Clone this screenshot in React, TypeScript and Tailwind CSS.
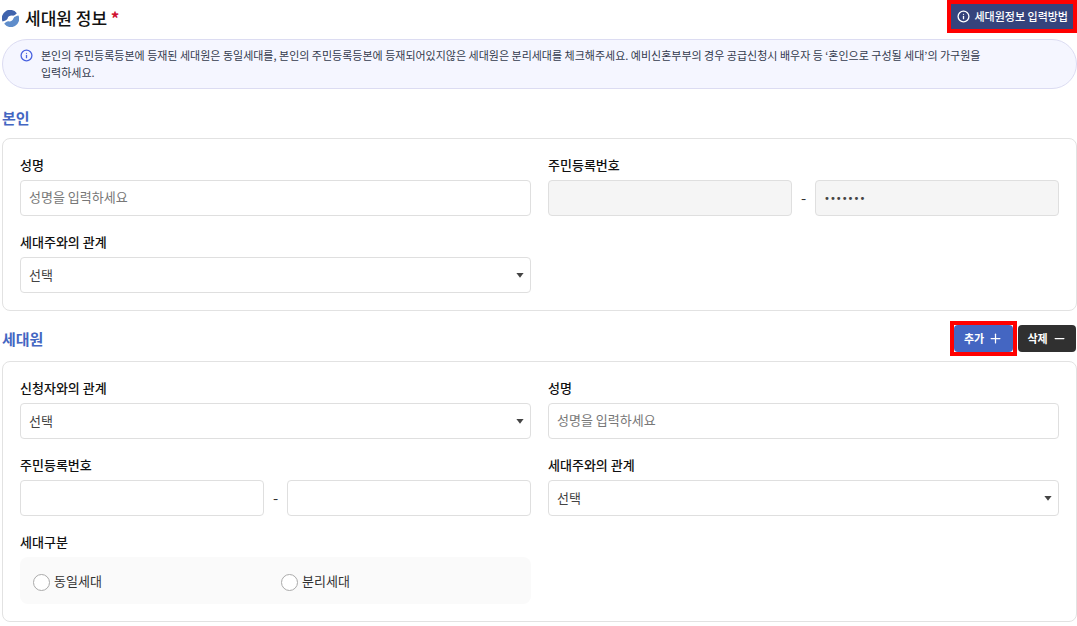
import { useId, type ReactNode } from "react";
import clsx from "clsx";
import { Info, Minus, Plus } from "lucide-react";

const controlClass =
  "h-9 w-full min-w-0 rounded-[4px] border border-[#dfdfdf] px-2 text-[#444] placeholder:text-[#777]";

function Field({
  id,
  label,
  children,
}: {
  id: string;
  label: string;
  children: ReactNode;
}) {
  return (
    <div className="min-w-0">
      <label
        htmlFor={id}
        className="mb-[5px] block text-[13px] leading-5 font-medium text-[#111]"
      >
        {label}
      </label>
      {children}
    </div>
  );
}

function TextField({ label }: { label: string }) {
  const id = useId();
  return (
    <Field id={id} label={label}>
      <input
        id={id}
        type="text"
        placeholder="성명을 입력하세요"
        className={clsx(controlClass, "bg-white pb-1 text-[13px]")}
      />
    </Field>
  );
}

function SelectField({ label }: { label: string }) {
  const id = useId();
  return (
    <Field id={id} label={label}>
      <div className="relative">
        <select
          id={id}
          className={clsx(
            controlClass,
            "block appearance-none bg-white text-[13px]",
          )}
        >
          <option>선택</option>
        </select>
        <svg
          viewBox="0 0 8 5"
          className="pointer-events-none absolute top-4 right-[7px] h-[5px] w-2"
          fill="#444"
        >
          <path d="M0.4 0h7.2L4 4.8z" />
        </svg>
      </div>
    </Field>
  );
}

function IdNumberField({
  label,
  locked,
}: {
  label: string;
  locked?: boolean;
}) {
  const id = useId();
  const background = locked ? "bg-[#f5f5f5]" : "bg-white";
  return (
    <Field id={id} label={label}>
      <div className="flex items-center">
        <input
          id={id}
          type="text"
          readOnly={locked}
          className={clsx(controlClass, background, "text-[13px]")}
        />
        <span className="w-[23px] shrink-0 text-center text-[15px] leading-5 text-[#333]">
          -
        </span>
        <input
          type="password"
          aria-label={label}
          readOnly={locked}
          defaultValue={locked ? "0000000" : ""}
          className={clsx(
            controlClass,
            background,
            "font-['DejaVu_Sans',sans-serif] text-[10px]",
          )}
        />
      </div>
    </Field>
  );
}

function HouseholdTypeField() {
  return (
    <fieldset className="min-w-0">
      <legend className="mb-[5px] text-[13px] leading-5 font-medium text-[#111]">
        세대구분
      </legend>
      <div className="grid grid-cols-2 rounded-lg bg-[#fafafa] pt-[14px] pr-[2px] pb-[13px] pl-[13px]">
        {["동일세대", "분리세대"].map((name) => (
          <label
            key={name}
            className="flex items-center gap-1 text-[13px] leading-5 text-[#333]"
          >
            <input
              type="radio"
              name="householdType"
              className="mt-[3px] size-[17px] appearance-none rounded-full border border-[#aaa] bg-white checked:border-[5px] checked:border-[#4466c2]"
            />
            {name}
          </label>
        ))}
      </div>
    </fieldset>
  );
}

function Card({ children }: { children: ReactNode }) {
  return (
    <div className="grid grid-cols-2 gap-x-[17px] gap-y-4 rounded-lg border border-[#e2e2e2] px-[17px] pt-4 pb-[17px]">
      {children}
    </div>
  );
}

function Logo() {
  return (
    <svg viewBox="0 0 17 17" className="size-[17px]">
      <path
        d="M0.5 11.4A8.3 8.3 0 0 1 14.8 3.2C13.4 4.8 12.4 5.6 10.9 5.7 8.2 5.2 6 6.4 5.5 8.8 4.6 10.3 2.6 11 0.5 11.4z"
        fill="#3f63ad"
      />
      <path
        d="M16.5 5.6A8.3 8.3 0 0 1 2.2 13.8C3.6 12.2 4.6 11.4 6.1 11.3 8.8 11.8 11 10.6 11.5 8.2 12.4 6.7 14.4 6 16.5 5.6z"
        fill="#5f8dcb"
      />
    </svg>
  );
}

export default function App() {
  return (
    <main className="bg-white pl-[2px] font-['Noto_Sans_CJK_KR','Noto_Sans',sans-serif]">
      <header className="flex items-start justify-between">
        <h1 className="flex items-center gap-[6px] pt-1 text-[17px] leading-7 font-medium text-[#111]">
          <Logo />
          <span>
            세대원 정보 <span className="font-bold text-[#d0102f]">*</span>
          </span>
        </h1>
        <div className="border-4 border-[#ff0000]">
          <button
            type="button"
            className="flex h-[25px] items-center gap-1 bg-[#35437c] pr-[5px] pl-[6px] text-[11px] font-medium text-white"
          >
            <Info className="size-[13px]" strokeWidth={2.4} />
            세대원정보 입력방법
          </button>
        </div>
      </header>

      <div className="mt-[6px] flex gap-2 rounded-full border border-[#dcdcf2] bg-[#f5f6ff] py-[7px] pr-14 pl-[17px] text-[11px] leading-[17px] text-[#333a4d]">
        <Info
          className="mt-[2px] size-[13px] shrink-0 text-[#4a63e0]"
          strokeWidth={2.4}
        />
        <p className="break-keep">
          본인의 주민등록등본에 등재된 세대원은 동일세대를, 본인의
          주민등록등본에 등재되어있지않은 세대원은 분리세대를 체크해주세요.
          예비신혼부부의 경우 공급신청시 배우자 등 ‘혼인으로 구성될 세대’의
          가구원을 입력하세요.
        </p>
      </div>

      <section>
        <h2 className="pt-[17px] pb-2 text-[15px] leading-6 font-bold text-[#4466c2]">
          본인
        </h2>
        <Card>
          <TextField label="성명" />
          <IdNumberField label="주민등록번호" locked />
          <SelectField label="세대주와의 관계" />
        </Card>
      </section>

      <section className="mt-[10px]">
        <div className="mb-[5px] flex items-center justify-between">
          <h2 className="text-[15px] leading-6 font-bold text-[#4466c2]">
            세대원
          </h2>
          <div className="flex items-center pr-px">
            <div className="border-4 border-[#ff0000]">
              <button
                type="button"
                className="flex h-[27px] w-[59px] items-center justify-center gap-1 rounded-[4px] bg-[#4466c2] text-[11px] font-bold text-white"
              >
                추가
                <Plus className="size-[15px]" />
              </button>
            </div>
            <button
              type="button"
              className="ml-px flex h-[27px] w-[58px] items-center justify-center gap-1 rounded-[4px] bg-[#303030] text-[11px] font-bold text-white"
            >
              삭제
              <Minus className="size-[15px]" />
            </button>
          </div>
        </div>
        <Card>
          <SelectField label="신청자와의 관계" />
          <TextField label="성명" />
          <IdNumberField label="주민등록번호" />
          <SelectField label="세대주와의 관계" />
          <HouseholdTypeField />
        </Card>
      </section>
    </main>
  );
}
